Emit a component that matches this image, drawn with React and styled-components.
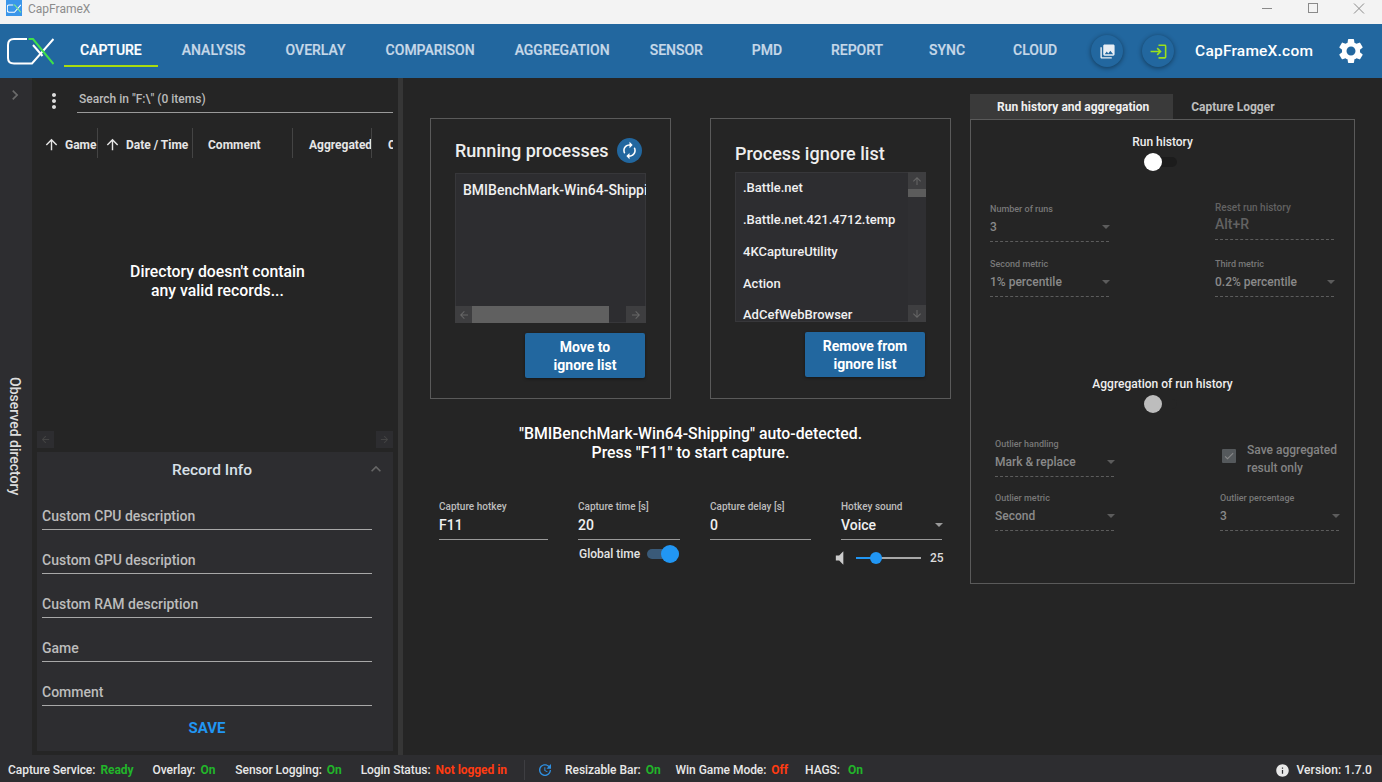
import React from 'react'
import styled, { createGlobalStyle } from 'styled-components'
import {
  MdArrowBack, MdArrowDownward, MdArrowForward, MdArrowUpward, MdAutorenew, MdCheck,
  MdChevronRight, MdInfo, MdKeyboardArrowUp, MdLogin, MdMoreVert, MdPhotoLibrary,
  MdSettings, MdUpdate, MdVolumeMute,
} from 'react-icons/md'

const GlobalStyle = createGlobalStyle`
  html, body { margin: 0; padding: 0; background: #252525; }
  * { box-sizing: border-box; }
  body { font-family: Roboto, "Liberation Sans", sans-serif; overflow: hidden; }
`

const Page = styled.div`
  width: 1382px;
  height: 782px;
  display: flex;
  flex-direction: column;
  overflow: hidden;
  color: #fff;
`

/* title bar */
const TitleBar = styled.div`
  height: 24px;
  flex: none;
  display: flex;
  align-items: center;
  background: #f3f3f3;
  color: #8c8c8c;
  font-size: 12px;
`
const TitleIcon = styled.div`
  width: 16px;
  height: 16px;
  margin: -8px 6px 0 6px;
  background: #3a96ea;
  display: flex;
  align-items: center;
  justify-content: center;
`
const TitleText = styled.span`
  flex: 1;
  margin-top: -7px;
`
const WinButton = styled.div`
  width: 46px;
  height: 24px;
  display: flex;
  align-items: flex-start;
  justify-content: center;
  padding-top: 3px;
`

/* nav bar */
const NavBar = styled.div`
  height: 54px;
  flex: none;
  display: flex;
  align-items: center;
  background: #22679f;
  padding-left: 7px;
`
const LogoWrap = styled.div`
  width: 47px;
  height: 28px;
  margin-right: 10px;
`
const Tabs = styled.div`
  display: flex;
  gap: 8px;
  align-self: flex-start;
`
const Tab = styled.div`
  min-width: 80px;
  height: 43px;
  padding: 11px 16px 0;
  display: flex;
  align-items: center;
  justify-content: center;
  font-size: 14px;
  font-weight: 500;
  -webkit-text-stroke: 0.2px currentColor;
  border-bottom: 2px solid ${p => (p.$active ? '#a9dc0f' : 'transparent')};
  color: ${p => (p.$active ? '#fff' : '#c6d8e8')};
`
const CircleButton = styled.div`
  width: 32px;
  height: 32px;
  border-radius: 50%;
  margin-left: ${p => p.$ml}px;
  display: flex;
  align-items: center;
  justify-content: center;
  background: #22679f;
  box-shadow: 0 1px 5px rgba(0, 0, 0, 0.45);
  color: ${p => p.$color};
`
const SiteLink = styled.div`
  margin-left: 21px;
  font-size: 15.500px;
  font-weight: 500;
  letter-spacing: 0.2px;
`
const GearWrap = styled.div`
  margin-left: 23px;
  display: flex;
`

/* body */
const Body = styled.div`
  flex: 1;
  min-height: 0;
  display: flex;
`
const Rail = styled.div`
  width: 32px;
  flex: none;
  display: flex;
  flex-direction: column;
  align-items: center;
  background: #2d2d30;
  color: #6a6a6a;
  padding: 7px 2px 0 0;
`
const RailLabel = styled.div`
  flex: 1;
  display: flex;
  align-items: center;
  justify-content: center;
  writing-mode: vertical-rl;
  font-size: 14px;
  font-weight: 500;
  color: #ddd;
  padding-top: 13px;
`
const SidePanel = styled.div`
  width: 366px;
  flex: none;
  display: flex;
  flex-direction: column;
  padding: 0 5px 4px;
  background: #252525;
`
const Splitter = styled.div`
  width: 5px;
  flex: none;
  background: #363636;
`
const SearchRow = styled.div`
  height: 35px;
  flex: none;
  display: flex;
  align-items: flex-end;
`
const DotsWrap = styled.div`
  width: 40px;
  height: 28px;
  flex: none;
  display: flex;
  align-items: center;
  color: #ddd;
  padding: 4px 0 0 5px;
`
const SearchBox = styled.div`
  flex: 1;
  height: 24px;
  padding: 3px 0 0 2px;
  font-size: 12px;
  font-weight: 500;
  color: #bbb;
  border-bottom: 1px solid #9a9a9a;
`
const TableHead = styled.div`
  height: 30px;
  flex: none;
  margin-top: 15px;
  display: flex;
  overflow: hidden;
`
const HeadCell = styled.div`
  width: ${p => p.$w}px;
  flex: none;
  display: flex;
  align-items: center;
  gap: 5px;
  padding: 3px 0 0 ${p => p.$pl}px;
  font-size: 12px;
  font-weight: 700;
  color: #e6e6e6;
  white-space: nowrap;
  overflow: hidden;
  border-right: ${p => (p.$last ? 'none' : '1px solid #444')};
`
const EmptyText = styled.div`
  flex: 1;
  display: flex;
  align-items: center;
  justify-content: center;
  text-align: center;
  font-size: 15.800px;
  line-height: 19px;
  font-weight: 500;
  padding: 0 0 28px 5px;
`
const TableScroll = styled.div`
  height: 17px;
  flex: none;
  display: flex;
  justify-content: space-between;
  margin-bottom: 4px;
`
const FaintButton = styled.div`
  width: 17px;
  height: 17px;
  display: flex;
  align-items: center;
  justify-content: center;
  background: #2d2d30;
  color: #444;
`
const RecordInfo = styled.div`
  height: 299px;
  flex: none;
  display: flex;
  flex-direction: column;
  background: #2d2d30;
`
const RecordHead = styled.div`
  height: 34px;
  flex: none;
  display: flex;
  align-items: center;
  padding: 0 7px 0 21px;
  color: #666;
`
const RecordTitle = styled.div`
  flex: 1;
  padding-top: 1px;
  text-align: center;
  font-size: 15.500px;
  font-weight: 500;
  color: #d8e0e8;
`
const RecordForm = styled.div`
  width: 330px;
  margin-left: 5px;
`
const RecordField = styled.div`
  height: 44px;
  display: flex;
  align-items: flex-end;
  padding-bottom: 5px;
  font-size: 14px;
  font-weight: 500;
  color: #bcbcbc;
  border-bottom: 1px solid #a8a8a8;
`
const SaveButton = styled.div`
  margin-top: 13px;
  text-align: center;
  font-size: 15px;
  font-weight: 700;
  color: #2196f3;
`

/* capture column */
const CaptureColumn = styled.div`
  width: 548px;
  flex: none;
  padding: 40px 0 0 27px;
`
const Cards = styled.div`
  display: flex;
  gap: 39px;
`
const Card = styled.div`
  width: 241px;
  height: 281px;
  display: flex;
  flex-direction: column;
  padding: 19px 0 0 24px;
  border: 1px solid #5a5a5a;
`
const CardHead = styled.div`
  height: ${p => p.$h}px;
  margin-bottom: ${p => p.$mb}px;
  display: flex;
  align-items: center;
  gap: 8px;
  font-size: 18px;
  font-weight: 500;
  color: #eee;
`
const RefreshButton = styled.div`
  width: 25px;
  height: 25px;
  border-radius: 50%;
  display: flex;
  align-items: center;
  justify-content: center;
  background: #22679f;
`
const ListBox = styled.div`
  width: 191px;
  height: 150px;
  display: flex;
  flex-direction: ${p => (p.$horizontal ? 'column' : 'row')};
  background: #2d2d30;
  box-shadow: inset 0 0 0 1px #37373a;
  overflow: hidden;
`
const ListItems = styled.div`
  flex: 1;
  min-width: 0;
  min-height: 0;
  overflow: hidden;
  margin-top: ${p => p.$mt}px;
`
const ListItem = styled.div`
  height: 31.750px;
  display: flex;
  align-items: center;
  padding-left: 8px;
  font-size: ${p => p.$size || 13}px;
  font-weight: 500;
  color: #f0f0f0;
  white-space: nowrap;
`
const ScrollBarH = styled.div`
  height: 17px;
  flex: none;
  display: flex;
`
const ScrollBarV = styled.div`
  width: 18px;
  flex: none;
  display: flex;
  flex-direction: column;
  background: #2f2f32;
`
const ScrollStep = styled.div`
  flex: none;
  width: ${p => p.$w}px;
  height: 17px;
  display: flex;
  align-items: center;
  justify-content: center;
  background: #3e3e40;
  color: #666;
`
const ThumbH = styled.div`
  width: 137px;
  background: #606060;
`
const ThumbV = styled.div`
  height: 8px;
  background: #5c5c5c;
`
const Spacer = styled.div`
  flex: 1;
`
const ActionButton = styled.div`
  width: 120px;
  height: 45px;
  margin: 10px 0 0 70px;
  border-radius: 2px;
  display: flex;
  align-items: center;
  justify-content: center;
  text-align: center;
  font-size: 14px;
  line-height: 18px;
  font-weight: 700;
  background: #22679f;
  box-shadow: 0 1px 3px rgba(0, 0, 0, 0.4);
`
const Detected = styled.div`
  width: 521px;
  margin-top: 25px;
  text-align: center;
  font-size: 15.800px;
  line-height: 19px;
  font-weight: 500;
`
const HotkeyRow = styled.div`
  display: flex;
  gap: 30px;
  margin: 40px 0 0 9px;
`
const HotkeyCol = styled.div`
  width: ${p => p.$w}px;
  flex: none;
`
const Field = styled.div`
  height: ${p => (p.$raise ? 37 : 38)}px;
  display: flex;
  flex-direction: column;
  margin-top: ${p => (p.$raise ? -1 : 0)}px;
  border-bottom: 1px ${p => (p.$dashed ? 'dashed #5c5c5c' : 'solid #9a9a9a')};
`
const FieldLabel = styled.div`
  height: 10px;
  line-height: 10px;
  font-size: ${p => p.$size || 10}px;
  font-weight: 500;
  white-space: nowrap;
  color: ${p => p.$color};
`
const FieldValue = styled.div`
  height: 18px;
  margin-top: ${p => p.$mt ?? 4}px;
  display: flex;
  align-items: center;
  justify-content: space-between;
  font-size: ${p => p.$size || 14}px;
  font-weight: 500;
  white-space: nowrap;
  color: ${p => p.$color};
`
const Caret = styled.div`
  width: 0;
  height: 0;
  margin-right: ${p => p.$mr ?? 0}px;
  border-left: 4px solid transparent;
  border-right: 4px solid transparent;
  border-top: 4px solid ${p => p.$color};
`
const GlobalTime = styled.div`
  height: 18px;
  margin-top: 5px;
  display: flex;
  align-items: center;
  gap: 7px;
  padding-left: 1px;
  font-size: 12px;
  font-weight: 500;
  color: #e4e4e4;
  white-space: nowrap;
`
const Toggle = styled.div`
  position: relative;
  width: ${p => p.$w}px;
  height: 10px;
  border-radius: 5px;
  background: ${p => p.$track};
`
const Knob = styled.div`
  position: absolute;
  top: -4px;
  ${p => (p.$on ? 'right: 0;' : 'left: 0;')}
  width: 18px;
  height: 18px;
  border-radius: 50%;
  background: ${p => p.$color};
`
const VolumeRow = styled.div`
  width: 108px;
  height: 14px;
  margin: 11px 0 0 -5px;
  display: flex;
  align-items: center;
  font-size: 12px;
  font-weight: 500;
  color: #ddd;
`
const VolumeIcon = styled.div`
  width: 20px;
  flex: none;
  display: flex;
  color: #ccc;
`
const SliderTrack = styled.div`
  position: relative;
  width: 65px;
  height: 2px;
  flex: none;
  margin-right: 9px;
  background: #a8a8a8;
`
const SliderFill = styled.div`
  height: 2px;
  background: #2196f3;
`
const SliderThumb = styled.div`
  position: absolute;
  top: -5px;
  width: 12px;
  height: 12px;
  margin-left: -6px;
  border-radius: 50%;
  background: #2196f3;
`

/* history column */
const HistoryColumn = styled.div`
  width: 385px;
  flex: none;
  padding-top: 16px;
  margin-left: 19px;
`
const HistoryTabs = styled.div`
  height: 25px;
  display: flex;
`
const HistoryTab = styled.div`
  padding: 0 24px 0 ${p => (p.$active ? 27 : 18)}px;
  display: flex;
  align-items: center;
  font-size: 12px;
  font-weight: 700;
  color: ${p => (p.$active ? '#f0f0f0' : '#bdbdbd')};
  background: ${p => (p.$active ? '#3a3a3a' : 'transparent')};
`
const HistoryPanel = styled.div`
  height: 465px;
  display: flex;
  flex-direction: column;
  border: 1px solid #5a5a5a;
`
const SectionTitle = styled.div`
  margin-top: ${p => p.$mt}px;
  height: 16px;
  line-height: 16px;
  text-align: center;
  font-size: 12px;
  font-weight: 500;
  color: #eee;
`
const ToggleHolder = styled.div`
  width: 33px;
  height: 10px;
  margin: 7px 0 4px 173px;
`
const OptionGrid = styled.div`
  display: grid;
  grid-template-columns: 119px 119px;
  column-gap: 106px;
  row-gap: ${p => p.$rowGap}px;
  margin: ${p => p.$mt}px 0 0 ${p => p.$ml}px;
`
const CheckCell = styled.div`
  display: flex;
  gap: 11px;
  padding: 2px 0 0 2px;
  font-size: 12px;
  line-height: 18px;
  font-weight: 500;
  color: #838383;
  white-space: nowrap;
`
const CheckBox = styled.div`
  width: 14px;
  height: 14px;
  flex: none;
  margin-top: 8px;
  border-radius: 1px;
  display: flex;
  align-items: center;
  justify-content: center;
  background: #55595c;
  color: #8a8a8a;
`

/* status bar */
const StatusBar = styled.div`
  height: 27px;
  flex: none;
  display: flex;
  align-items: center;
  padding: 3px 10px 0 8px;
  background: #2d2d30;
  font-size: 12px;
  font-weight: 500;
  letter-spacing: -0.05px;
  color: #e8e8e8;
  white-space: nowrap;
`
const StatusItem = styled.div`
  margin-right: ${p => p.$gap || 19}px;
`
const StatusValue = styled.span`
  margin-left: ${p => p.$ml || 5}px;
  font-weight: 700;
  color: ${p => (p.$bad ? '#ff3b12' : '#22b52a')};
`
const StatusDivider = styled.div`
  width: 1px;
  height: 20px;
  margin: 0 12px 0 -2px;
  background: #3e3e42;
`
const StatusIcon = styled.div`
  display: flex;
  margin-right: ${p => p.$mr}px;
  color: ${p => p.$color};
`
const VersionText = styled.span`
  letter-spacing: 0.1px;
`

const Logo = () => (
  <svg width="47" height="28" viewBox="0 0 47 28" fill="none" strokeWidth="2">
    <path d="M20 2H7Q1 2 1 8V21Q1 26.500 7 26.500H25L46.500 2" stroke="#fff" />
    <path d="M21.500 2H26L46.500 27" stroke="#3fe04a" />
    <path d="M26 8L35.500 19" stroke="#fff" />
  </svg>
)

const TinyLogo = () => (
  <svg width="14" height="9" viewBox="0 0 47 28" fill="none" strokeWidth="3.500">
    <path d="M20 2H7Q1 2 1 8V21Q1 26.500 7 26.500H25L46.500 2" stroke="#fff" />
    <path d="M21.500 2H26L46.500 27" stroke="#7ff08a" />
  </svg>
)

const SelectField = ({ label, value, size }) => (
  <Field $dashed>
    <FieldLabel $size={9} $color="#787878">{label}</FieldLabel>
    <FieldValue $size={size || 12} $color="#8a8a8a">
      {value}
      <Caret $color="#5c5c5c" $mr={-1} />
    </FieldValue>
  </Field>
)

const navItems = ['ANALYSIS', 'OVERLAY', 'COMPARISON', 'AGGREGATION', 'SENSOR', 'PMD', 'REPORT', 'SYNC', 'CLOUD']
const ignored = ['.Battle.net', '.Battle.net.421.4712.temp', '4KCaptureUtility', 'Action', 'AdCefWebBrowser']

export default function App() {
  return (
    <Page>
      <GlobalStyle />
      <TitleBar>
        <TitleIcon><TinyLogo /></TitleIcon>
        <TitleText>CapFrameX</TitleText>
        <WinButton>
          <svg width="12" height="12" viewBox="0 0 12 12"><path d="M1 5.500H11" stroke="#8a8a8a" /></svg>
        </WinButton>
        <WinButton>
          <svg width="12" height="12" viewBox="0 0 12 12" fill="none"><rect x="1.500" y="0.500" width="9" height="9" stroke="#8a8a8a" /></svg>
        </WinButton>
        <WinButton>
          <svg width="12" height="12" viewBox="0 0 12 12"><path d="M1 0.500L11 10.500M11 0.500L1 10.500" stroke="#8a8a8a" /></svg>
        </WinButton>
      </TitleBar>

      <NavBar>
        <LogoWrap><Logo /></LogoWrap>
        <Tabs>
          <Tab $active>CAPTURE</Tab>
          {navItems.map(n => <Tab key={n}>{n}</Tab>)}
        </Tabs>
        <CircleButton $ml={16} $color="#e8eef4"><MdPhotoLibrary size={17} /></CircleButton>
        <CircleButton $ml={19} $color="#9be21a"><MdLogin size={19} /></CircleButton>
        <SiteLink>CapFrameX.com</SiteLink>
        <GearWrap><MdSettings size={30} color="#fff" /></GearWrap>
      </NavBar>

      <Body>
        <Rail>
          <MdChevronRight size={20} />
          <RailLabel>Observed directory</RailLabel>
        </Rail>

        <SidePanel>
          <SearchRow>
            <DotsWrap><MdMoreVert size={24} /></DotsWrap>
            <SearchBox>Search in "F:\" (0 items)</SearchBox>
          </SearchRow>
          <TableHead>
            <HeadCell $w={61} $pl={6}><MdArrowUpward size={17} />Game</HeadCell>
            <HeadCell $w={95} $pl={6}><MdArrowUpward size={17} />Date / Time</HeadCell>
            <HeadCell $w={100} $pl={15}>Comment</HeadCell>
            <HeadCell $w={79} $pl={16}>Aggregated</HeadCell>
            <HeadCell $w={21} $pl={16} $last>Custom</HeadCell>
          </TableHead>
          <EmptyText>Directory doesn't contain<br />any valid records...</EmptyText>
          <TableScroll>
            <FaintButton><MdArrowBack size={11} /></FaintButton>
            <FaintButton><MdArrowForward size={11} /></FaintButton>
          </TableScroll>
          <RecordInfo>
            <RecordHead>
              <RecordTitle>Record Info</RecordTitle>
              <MdKeyboardArrowUp size={20} />
            </RecordHead>
            <RecordForm>
              <RecordField>Custom CPU description</RecordField>
              <RecordField>Custom GPU description</RecordField>
              <RecordField>Custom RAM description</RecordField>
              <RecordField>Game</RecordField>
              <RecordField>Comment</RecordField>
              <SaveButton>SAVE</SaveButton>
            </RecordForm>
          </RecordInfo>
        </SidePanel>
        <Splitter />

        <CaptureColumn>
          <Cards>
            <Card>
              <CardHead $h={25} $mb={10}>
                Running processes
                <RefreshButton><MdAutorenew size={19} color="#fff" /></RefreshButton>
              </CardHead>
              <ListBox $horizontal>
                <ListItems $mt={1}>
                  <ListItem $size={14}>BMIBenchMark-Win64-Shipping</ListItem>
                </ListItems>
                <ScrollBarH>
                  <ScrollStep $w={17}><MdArrowBack size={12} /></ScrollStep>
                  <ThumbH />
                  <Spacer />
                  <ScrollStep $w={20}><MdArrowForward size={12} /></ScrollStep>
                </ScrollBarH>
              </ListBox>
              <ActionButton>Move to<br />ignore list</ActionButton>
            </Card>
            <Card>
              <CardHead $h={30} $mb={4}>Process ignore list</CardHead>
              <ListBox>
                <ListItems $mt={0}>
                  {ignored.map(i => <ListItem key={i}>{i}</ListItem>)}
                </ListItems>
                <ScrollBarV>
                  <ScrollStep $w={18}><MdArrowUpward size={12} /></ScrollStep>
                  <ThumbV />
                  <Spacer />
                  <ScrollStep $w={18}><MdArrowDownward size={12} /></ScrollStep>
                </ScrollBarV>
              </ListBox>
              <ActionButton>Remove from<br />ignore list</ActionButton>
            </Card>
          </Cards>

          <Detected>"BMIBenchMark-Win64-Shipping" auto-detected.<br />Press "F11" to start capture.</Detected>

          <HotkeyRow>
            <HotkeyCol $w={109}>
              <Field>
                <FieldLabel $color="#bdbdbd">Capture hotkey</FieldLabel>
                <FieldValue $color="#f0f0f0">F11</FieldValue>
              </Field>
            </HotkeyCol>
            <HotkeyCol $w={102}>
              <Field>
                <FieldLabel $color="#bdbdbd">Capture time [s]</FieldLabel>
                <FieldValue $color="#f0f0f0">20</FieldValue>
              </Field>
              <GlobalTime>
                Global time
                <Toggle $w={32} $track="#3a5a78"><Knob $on $color="#2196f3" /></Toggle>
              </GlobalTime>
            </HotkeyCol>
            <HotkeyCol $w={101}>
              <Field>
                <FieldLabel $color="#bdbdbd">Capture delay [s]</FieldLabel>
                <FieldValue $color="#f0f0f0">0</FieldValue>
              </Field>
            </HotkeyCol>
            <HotkeyCol $w={101}>
              <Field>
                <FieldLabel $color="#bdbdbd">Hotkey sound</FieldLabel>
                <FieldValue $color="#f0f0f0">
                  Voice
                  <Caret $color="#9a9a9a" $mr={-1} />
                </FieldValue>
              </Field>
              <VolumeRow>
                <VolumeIcon><MdVolumeMute size={20} style={{ marginLeft: -6 }} /></VolumeIcon>
                <SliderTrack>
                  <SliderFill style={{ width: '30%' }} />
                  <SliderThumb style={{ left: '30%' }} />
                </SliderTrack>
                25
              </VolumeRow>
            </HotkeyCol>
          </HotkeyRow>
        </CaptureColumn>

        <HistoryColumn>
          <HistoryTabs>
            <HistoryTab $active>Run history and aggregation</HistoryTab>
            <HistoryTab>Capture Logger</HistoryTab>
          </HistoryTabs>
          <HistoryPanel>
            <SectionTitle $mt={14}>Run history</SectionTitle>
            <ToggleHolder>
              <Toggle $w={33} $track="#1c1c1c"><Knob $color="#fff" /></Toggle>
            </ToggleHolder>
            <OptionGrid $rowGap={17} $mt={33} $ml={19}>
              <SelectField label="Number of runs" value="3" />
              <Field $dashed $raise>
                <FieldLabel $color="#626262">Reset run history</FieldLabel>
                <FieldValue $mt={2} $color="#626262">Alt+R</FieldValue>
              </Field>
              <SelectField label="Second metric" value="1% percentile" />
              <SelectField label="Third metric" value="0.2% percentile" />
            </OptionGrid>

            <SectionTitle $mt={79}>Aggregation of run history</SectionTitle>
            <ToggleHolder>
              <Toggle $w={33} $track="#252525"><Knob $color="#bdbdbd" /></Toggle>
            </ToggleHolder>
            <OptionGrid $rowGap={16} $mt={26} $ml={24}>
              <SelectField label="Outlier handling" value="Mark & replace" />
              <CheckCell>
                <CheckBox><MdCheck size={12} /></CheckBox>
                <div>Save aggregated<br />result only</div>
              </CheckCell>
              <SelectField label="Outlier metric" value="Second" />
              <SelectField label="Outlier percentage" value="3" />
            </OptionGrid>
          </HistoryPanel>
        </HistoryColumn>
      </Body>

      <StatusBar>
        <StatusItem>Capture Service:<StatusValue>Ready</StatusValue></StatusItem>
        <StatusItem $gap={20}>Overlay:<StatusValue>On</StatusValue></StatusItem>
        <StatusItem>Sensor Logging:<StatusValue>On</StatusValue></StatusItem>
        <StatusItem>Login Status:<StatusValue $bad>Not logged in</StatusValue></StatusItem>
        <StatusDivider />
        <StatusIcon $mr={12} $color="#2f8fe0"><MdUpdate size={16} /></StatusIcon>
        <StatusItem $gap={15}>Resizable Bar:<StatusValue>On</StatusValue></StatusItem>
        <StatusItem $gap={17}>Win Game Mode:<StatusValue $bad>Off</StatusValue></StatusItem>
        <StatusItem>HAGS:<StatusValue $ml={8}>On</StatusValue></StatusItem>
        <Spacer />
        <StatusIcon $mr={6} $color="#e8e8e8"><MdInfo size={15} /></StatusIcon>
        <VersionText>Version: 1.7.0</VersionText>
      </StatusBar>
    </Page>
  )
}
